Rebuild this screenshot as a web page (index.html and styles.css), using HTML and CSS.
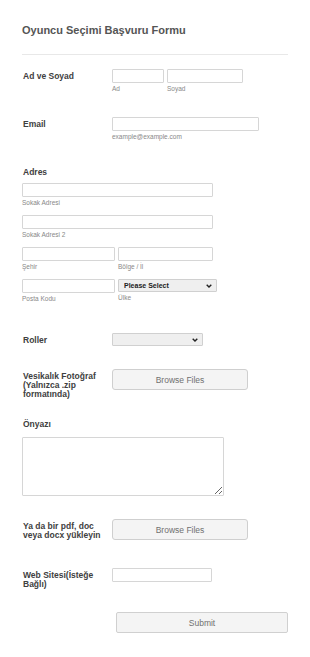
FILE: index.html
```html
<!DOCTYPE html>
<html lang="tr">
<head>
<meta charset="utf-8">
<title>Oyuncu Seçimi Başvuru Formu</title>
<link rel="stylesheet" href="styles.css">
</head>
<body>
<form class="form">
  <div class="header">
    <h1 class="title">Oyuncu Seçimi Başvuru Formu</h1>
  </div>

  <div class="row row-name">
    <label class="label">Ad ve Soyad</label>
    <div class="fields">
      <div class="field w-ad"><input class="input" type="text"><span class="sub">Ad</span></div>
      <div class="field w-soyad"><input class="input" type="text"><span class="sub">Soyad</span></div>
    </div>
  </div>

  <div class="row row-email">
    <label class="label">Email</label>
    <div class="fields">
      <div class="field w-email"><input class="input" type="email"><span class="sub">example@example.com</span></div>
    </div>
  </div>

  <div class="block row-address">
    <label class="label label-top">Adres</label>
    <div class="addr">
      <div class="field w-full"><input class="input" type="text"><span class="sub">Sokak Adresi</span></div>
      <div class="field w-full"><input class="input" type="text"><span class="sub">Sokak Adresi 2</span></div>
      <div class="pair">
        <div class="field w-half"><input class="input" type="text"><span class="sub">Şehir</span></div>
        <div class="field w-half2"><input class="input" type="text"><span class="sub">Bölge / İl</span></div>
      </div>
      <div class="pair">
        <div class="field w-half"><input class="input" type="text"><span class="sub">Posta Kodu</span></div>
        <div class="field w-country">
          <div class="select-wrap select-country">
            <select class="select select-dark"><option>Please Select</option></select>
            <svg class="chev" viewBox="0 0 6 4" width="6" height="4"><polyline points="0.7,0.7 3,3 5.3,0.7" fill="none" stroke="#222" stroke-width="1.4"/></svg>
          </div>
          <span class="sub">Ülke</span>
        </div>
      </div>
    </div>
  </div>

  <div class="row row-roles">
    <label class="label">Roller</label>
    <div class="fields">
      <div class="select-wrap select-roles">
        <select class="select"><option></option></select>
        <svg class="chev" viewBox="0 0 6 4" width="6" height="4"><polyline points="0.7,0.7 3,3 5.3,0.7" fill="none" stroke="#222" stroke-width="1.4"/></svg>
      </div>
    </div>
  </div>

  <div class="row row-photo">
    <label class="label">Vesikalık Fotoğraf (Yalnızca .zip formatında)</label>
    <div class="fields">
      <button type="button" class="browse">Browse Files</button>
    </div>
  </div>

  <div class="block row-cover">
    <label class="label label-top">Önyazı</label>
    <textarea class="textarea"></textarea>
  </div>

  <div class="row row-doc">
    <label class="label">Ya da bir pdf, doc veya docx yükleyin</label>
    <div class="fields">
      <button type="button" class="browse">Browse Files</button>
    </div>
  </div>

  <div class="row row-web">
    <label class="label">Web Sitesi(İsteğe Bağlı)</label>
    <div class="fields">
      <input class="input w-web" type="text">
    </div>
  </div>

  <div class="submit-row">
    <button type="submit" class="submit">Submit</button>
  </div>
</form>
</body>
</html>
```

FILE: styles.css
```css
* { box-sizing: border-box; }

html, body {
  margin: 0;
  padding: 0;
  background: #ffffff;
}

body {
  font-family: "Liberation Sans", Arial, sans-serif;
  color: #444;
}

.form {
  padding: 0 22px 30px 22px;
  width: 310px;
}

.header {
  padding-top: 24px;
  padding-bottom: 17px;
  border-bottom: 1px solid #e8e8e8;
}

.title {
  margin: 0;
  font-size: 11px;
  line-height: 13px;
  font-weight: bold;
  color: #555;
}

.row {
  display: flex;
  align-items: flex-start;
}

.label {
  display: block;
  width: 90px;
  flex: none;
  padding: 3px 4px 0 1px;
  font-size: 8.5px;
  line-height: 9px;
  font-weight: bold;
  color: #404040;
}

.label-top {
  width: auto;
  padding: 0 0 0 1px;
  line-height: 10px;
}

.fields {
  display: flex;
  gap: 3px;
}

.field {
  display: flex;
  flex-direction: column;
}

.input {
  display: block;
  width: 100%;
  height: 14px;
  margin: 0;
  padding: 0 3px;
  border: 1px solid #d6d6d6;
  border-radius: 1px;
  background: #fff;
  font: inherit;
  outline: none;
}

.sub {
  display: block;
  margin-top: 2px;
  font-size: 6.5px;
  line-height: 8px;
  color: #888888;
}

.w-ad { width: 52px; }
.w-soyad { width: 76px; }
.w-email { width: 147px; }
.w-full { width: 191px; }
.w-half { width: 93px; }
.w-half2 { width: 95px; }
.w-country { width: 99px; }
.w-web { width: 100px; }

.row-name { margin-top: 14px; }
.row-email { margin-top: 24px; }

.row-address { margin-top: 26px; }

.addr {
  display: flex;
  flex-direction: column;
  gap: 8px;
  margin-top: 6px;
}

.pair {
  display: flex;
  gap: 3px;
}

.select-wrap {
  position: relative;
}

.select {
  display: block;
  width: 100%;
  height: 13px;
  margin: 0;
  padding: 0 12px 0 5px;
  border: 1px solid #d0d0d0;
  border-radius: 1px;
  background: #efefef;
  appearance: none;
  -webkit-appearance: none;
  font-family: "Liberation Sans", Arial, sans-serif;
  font-size: 7.5px;
  line-height: 11px;
  color: #222;
  outline: none;
}

.select-dark { font-weight: bold; font-size: 7px; }

.chev {
  position: absolute;
  right: 5px;
  top: 5px;
  pointer-events: none;
}

.select-country { width: 99px; }
.select-roles { width: 91px; }

.row-roles { margin-top: 30px; }

.row-photo { margin-top: 23px; }

.browse {
  display: block;
  width: 136px;
  height: 21px;
  margin: 0;
  padding: 0;
  border: 1px solid #cfcfcf;
  border-radius: 3px;
  background: #f4f4f4;
  font-family: "Liberation Sans", Arial, sans-serif;
  font-size: 8.5px;
  color: #707070;
}

.row-cover { margin-top: 20px; }

.textarea {
  display: block;
  width: 202px;
  height: 59px;
  margin: 8px 0 0 0;
  padding: 2px;
  border: 1px solid #d6d6d6;
  border-radius: 1px;
  background: #fff;
  font: inherit;
  resize: both;
  outline: none;
}

.row-doc { margin-top: 23px; }

.row-web { margin-top: 28px; }

.submit-row {
  display: flex;
  padding-left: 94px;
  margin-top: 23px;
}

.submit {
  display: block;
  width: 172px;
  height: 21px;
  margin: 0;
  padding: 0;
  border: 1px solid #d0d0d0;
  border-radius: 2px;
  background: #f4f4f4;
  font-family: "Liberation Sans", Arial, sans-serif;
  font-size: 8.5px;
  color: #707070;
}
```
